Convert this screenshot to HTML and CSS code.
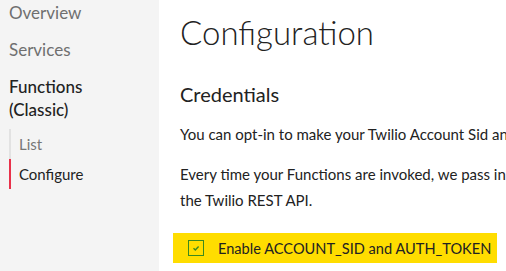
FILE: index.html
```html
<!DOCTYPE html>
<html>
<head>
  <title>Functions Configuration</title>
  <link rel="stylesheet" href="styles.css">
</head>
<body>

  <div class="layout">
    <nav class="sidebar">
      <a class="nav-item" href="#">Overview</a>
      <a class="nav-item" href="#">Services</a>
      <div class="nav-group">Functions (Classic)</div>
      <div class="subnav">
        <a class="subnav-item" href="#">List</a>
        <a class="subnav-item active" href="#">Configure</a>
      </div>
    </nav>

    <main class="content">
      <h1>Configuration</h1>
      <h2>Credentials</h2>
      <p>You can opt-in to make your Twilio Account Sid and Auth Token available in your Functions.</p>
      <p>Every time your Functions are invoked, we pass in your credentials so you can easily call<br>the Twilio REST API.</p>
      <label class="highlight">
        <span class="checkbox">
          <svg width="10" height="10" viewBox="0 0 10 10"><path d="M2.5 5.2 L4.3 6.9 L7.6 3.4" fill="none" stroke="#3c8a1e" stroke-width="1.4"/></svg>
        </span>
        Enable ACCOUNT_SID and AUTH_TOKEN
      </label>
    </main>
  </div>

</body>
</html>
```

FILE: styles.css
```css
body {
  margin: 0;
  font-family: Lato, "Open Sans", sans-serif;
  color: #222;
  background: #fff;
}

.layout {
  display: flex;
  height: 271px;
  overflow: hidden;
}

.sidebar {
  width: 150px;
  flex-shrink: 0;
  background: #f4f4f4;
  padding: 1px 0 0 9px;
  display: flex;
  flex-direction: column;
}

.nav-item {
  color: #6f6f6f;
  text-decoration: none;
  font-size: 17px;
  line-height: 23px;
  margin-bottom: 14px;
}

.nav-group {
  color: #222;
  font-size: 17px;
  font-weight: 500;
  line-height: 23px;
  width: 80px;
  margin-bottom: 8px;
}

.subnav {
  display: flex;
  flex-direction: column;
}

.subnav-item {
  color: #777;
  text-decoration: none;
  font-size: 15px;
  line-height: 30px;
  padding-left: 8px;
  border-left: 2px solid #e2e2e2;
}

.subnav-item.active {
  color: #222;
  border-left-color: #e8314a;
}

.content {
  flex: 1;
  padding-left: 21px;
  white-space: nowrap;
  overflow: hidden;
}

h1 {
  font-size: 33px;
  font-weight: 300;
  margin: 12px 0 0;
  line-height: 40px;
}

h2 {
  font-size: 20px;
  font-weight: 400;
  margin: 29px 0 0;
  line-height: 26px;
}

p {
  font-size: 15px;
  line-height: 26px;
  margin: 14px 0 0;
}

.highlight {
  display: flex;
  align-items: center;
  width: 324px;
  height: 30px;
  margin: 20px 0 0 -7px;
  padding-left: 15px;
  box-sizing: border-box;
  background: #ffdd00;
  font-size: 14.6px;
  color: #222;
}

.checkbox {
  width: 14px;
  height: 14px;
  border: 1px solid #3c8a1e;
  display: flex;
  align-items: center;
  justify-content: center;
  margin-right: 14px;
}
```
